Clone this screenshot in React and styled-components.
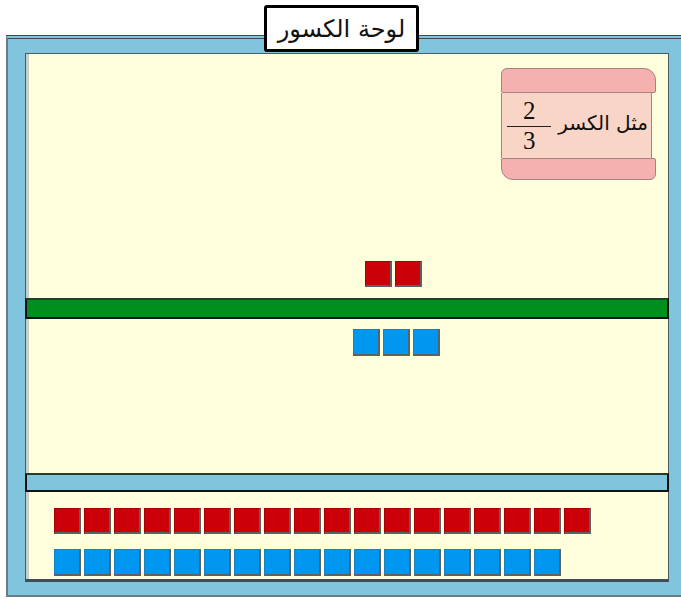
import React from "react";
import styled, { createGlobalStyle } from "styled-components";

const GlobalStyle = createGlobalStyle`
  html, body {
    margin: 0;
    padding: 0;
    background: #ffffff;
    overflow: hidden;
  }
  body {
    font-family: "DejaVu Sans", "Liberation Sans", sans-serif;
  }
`;

const Page = styled.div`
  width: 681px;
  height: 601px;
  display: flex;
  flex-direction: column;
  overflow: hidden;
`;

const TitleRow = styled.div`
  display: flex;
  justify-content: center;
  margin-top: 5px;
  position: relative;
  z-index: 2;
`;

const TitleBox = styled.div`
  width: 149px;
  height: 41px;
  border: 3px solid #000;
  border-radius: 3px;
  background: #fff;
  display: flex;
  align-items: center;
  justify-content: center;
  direction: rtl;
  font-size: 24px;
  color: #111;
  margin-left: 2px;
`;

const Frame = styled.div`
  margin: -17px -30px 0 6px;
  height: 562px;
  box-sizing: border-box;
  background: #80c4de;
  border-top: 4px double #3d4a50;
  border-left: 2px solid #6b7b82;
  border-bottom: 2px solid #6b7b82;
  padding: 14px 0 0 17px;
`;

const Board = styled.div`
  width: 642px;
  height: 525px;
  background: #fffedd;
  border: 1px solid #4d5a5f;
  border-bottom: 3px solid #3e4e55;
  box-shadow: inset 3px 0 0 #c9cfc6;
  display: flex;
  flex-direction: column;
`;

const Zone = styled.div`
  height: ${(p) => p.$h}px;
  display: flex;
  flex-direction: column;
  justify-content: ${(p) => p.$justify || "flex-start"};
  gap: ${(p) => p.$gap || 0}px;
  padding: ${(p) => p.$pad};
  box-sizing: border-box;
`;

const Bar = styled.div`
  height: ${(p) => p.$h}px;
  box-sizing: border-box;
  margin: 0 -1px;
  background: ${(p) => p.$color};
  border: 2px solid #111;
  border-top-color: #2b3a2b;
`;

const Row = styled.div`
  display: flex;
  gap: 3px;
  padding-left: ${(p) => p.$left || 0}px;
`;

const Square = styled.div`
  width: 27px;
  height: ${(p) => p.$h || 26}px;
  box-sizing: border-box;
  background: ${(p) => (p.$kind === "red" ? "#cc0009" : "#0097f0")};
  border: 1px solid ${(p) => (p.$kind === "red" ? "#a3000a" : "#1a7fc0")};
  border-right: 2px solid #5b6165;
  border-bottom: 2px solid #5b6165;
`;

const CardWrap = styled.div`
  display: flex;
  justify-content: flex-end;
`;

const Card = styled.div`
  width: 155px;
  display: flex;
  flex-direction: column;
`;

const Band = styled.div`
  height: ${(p) => p.$h}px;
  box-sizing: border-box;
  background: #f4b1b0;
  border: 1px solid #a88080;
  border-radius: ${(p) => (p.$top ? "6px 12px 2px 2px" : "2px 2px 6px 12px")};
`;

const CardBody = styled.div`
  height: 65px;
  margin-right: 4px;
  box-sizing: border-box;
  background: #f8d5c6;
  border-left: 1px solid #a88080;
  border-right: 1px solid #a88080;
  display: flex;
  align-items: center;
  direction: rtl;
  padding-right: 3px;
  gap: 7px;
`;

const CardText = styled.span`
  font-size: 20px;
  color: #111;
  margin-top: -6px;
  white-space: nowrap;
`;

const Fraction = styled.div`
  display: flex;
  flex-direction: column;
  align-items: center;
  width: 44px;
  font-family: "Liberation Serif", serif;
  font-size: 25px;
  line-height: 24px;
  color: #111;
`;

const FractionLine = styled.div`
  align-self: stretch;
  height: 1px;
  background: #222;
  margin: 3px 0 2px;
`;

function Squares({ count, kind, left, h }) {
  return (
    <Row $left={left}>
      {Array.from({ length: count }).map((_, i) => (
        <Square key={i} $kind={kind} $h={h} />
      ))}
    </Row>
  );
}

export default function App() {
  return (
    <Page>
      <GlobalStyle />
      <TitleRow>
        <TitleBox>لوحة الكسور</TitleBox>
      </TitleRow>
      <Frame>
        <Board>
          <Zone $h={244} $justify="space-between" $pad="14px 12px 11px 0">
            <CardWrap>
              <Card>
                <Band $h={25} $top />
                <CardBody>
                  <CardText>مثل الكسر</CardText>
                  <Fraction>
                    <span>2</span>
                    <FractionLine />
                    <span>3</span>
                  </Fraction>
                </CardBody>
                <Band $h={22} />
              </Card>
            </CardWrap>
            <Squares count={2} kind="red" left={339} />
          </Zone>
          <Bar $h={21} $color="#008e1c" />
          <Zone $h={154} $pad="10px 0 0 0">
            <Squares count={3} kind="blue" left={327} h={27} />
          </Zone>
          <Bar $h={19} $color="#80c4de" />
          <Zone $h={87} $gap={15} $pad="16px 0 0 0">
            <Squares count={18} kind="red" left={28} />
            <Squares count={17} kind="blue" left={28} h={27} />
          </Zone>
        </Board>
      </Frame>
    </Page>
  );
}
